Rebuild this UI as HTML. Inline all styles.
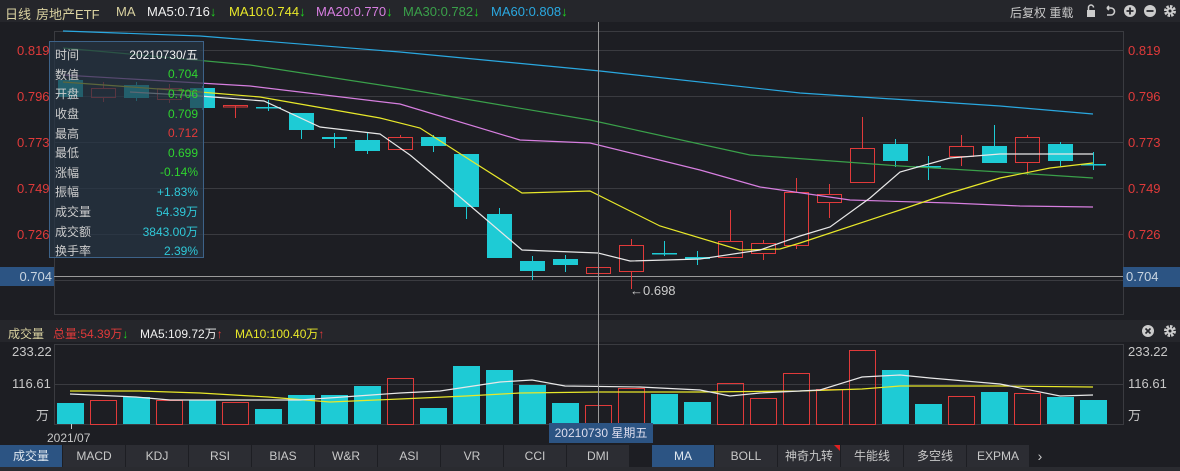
<!DOCTYPE html>
<html><head><meta charset="utf-8"><style>
*{margin:0;padding:0;box-sizing:border-box}
body{width:1180px;height:471px;background:#1d1e23;overflow:hidden;font-family:"Liberation Sans","Noto Sans CJK SC",sans-serif;position:relative;font-size:12px}
.abs{position:absolute;white-space:nowrap}
.hdr{left:0;top:0;width:1180px;height:22px;background:#25262b}
.tabs{left:0;top:445px;height:22px;display:flex}
.tab{width:63px;height:22px;background:#2c2d33;color:#c8c8c8;text-align:center;line-height:22px;font-size:12px;border-right:1px solid #1d1e23}
.tab.on{background:#2c5483;color:#e0e8f0}
.tt td{font-size:12px;height:19.6px;padding:0}
.h{font-size:13px}
.dn{color:#1fd21f;font-weight:bold}
.up{color:#e03a3a;font-weight:bold}
</style></head><body>
<div class="abs hdr"></div>
<div class="abs h" style="left:5px;top:4px;color:#d9d1a0">日线</div>
<div class="abs h" style="left:36px;top:4px;color:#d9d1a0">房地产ETF</div>
<div class="abs h" style="left:116px;top:4px;color:#d9d1a0">MA</div>
<div class="abs h" style="left:147px;top:4px;color:#f0f0f0">MA5:0.716<span class="dn">↓</span></div>
<div class="abs h" style="left:229px;top:4px;color:#e8e82a">MA10:0.744<span class="dn">↓</span></div>
<div class="abs h" style="left:316px;top:4px;color:#d77fe0">MA20:0.770<span class="dn">↓</span></div>
<div class="abs h" style="left:403px;top:4px;color:#3aa04a">MA30:0.782<span class="dn">↓</span></div>
<div class="abs h" style="left:491px;top:4px;color:#2aa8e0">MA60:0.808<span class="dn">↓</span></div>
<div class="abs" style="left:1010px;top:4px;color:#c8c8c8">后复权 重载</div>
<svg class="abs" style="left:1085px;top:4px" width="95" height="14">
<rect x="2" y="6" width="8" height="7" fill="#ccc"/><path d="M3.5 6V3.5a2.5 2.5 0 0 1 5 0" stroke="#ccc" stroke-width="1.5" fill="none"/>
<path d="M22 4h4a3.5 3.5 0 0 1 0 7h-4M22 4l2-2M22 4l2 2" stroke="#ccc" stroke-width="1.6" fill="none"/>
<circle cx="45" cy="7" r="6" fill="#ccc"/><path d="M41.5 7h7M45 3.5v7" stroke="#25262b" stroke-width="1.8"/>
<circle cx="65" cy="7" r="6" fill="#ccc"/><path d="M61.5 7h7" stroke="#25262b" stroke-width="1.8"/>
<circle cx="85" cy="7" r="4.5" fill="none" stroke="#ccc" stroke-width="3" stroke-dasharray="2.4 1.1"/><circle cx="85" cy="7" r="3.5" fill="#ccc"/><circle cx="85" cy="7" r="1.5" fill="#25262b"/>
</svg>

<svg class="abs" style="left:0;top:0" width="1180" height="471">
<g stroke="#3a3b40" stroke-width="1">
<line x1="54" y1="31.5" x2="1124" y2="31.5"/>
<line x1="54" y1="50.5" x2="1124" y2="50.5"/>
<line x1="54" y1="96.5" x2="1124" y2="96.5"/>
<line x1="54" y1="142.5" x2="1124" y2="142.5"/>
<line x1="54" y1="188.5" x2="1124" y2="188.5"/>
<line x1="54" y1="234.5" x2="1124" y2="234.5"/>
<line x1="54" y1="280.5" x2="1124" y2="280.5"/>
<line x1="54" y1="314.5" x2="1124" y2="314.5"/>
<line x1="54.5" y1="31" x2="54.5" y2="314"/>
<line x1="1123.5" y1="31" x2="1123.5" y2="314"/>
</g>
<rect x="0" y="320" width="1180" height="22" fill="#25262b"/>
<g stroke="#3a3b40">
<line x1="54" y1="344.5" x2="1124" y2="344.5"/>
<line x1="54" y1="384.5" x2="1124" y2="384.5"/>
<line x1="54" y1="424.5" x2="1124" y2="424.5"/>
<line x1="54.5" y1="344" x2="54.5" y2="424"/>
<line x1="1123.5" y1="344" x2="1123.5" y2="424"/>
</g>
<line x1="0" y1="276.5" x2="1180" y2="276.5" stroke="#9a9a9a"/>
<g id="c"></g>
<polyline fill="none" stroke="#2aa8e0" stroke-width="1.2" points="63,31 200,36 400,52 600,71 800,93 1000,106 1093,114"/>
<polyline fill="none" stroke="#3aa04a" stroke-width="1.2" points="63,48 250,65 400,88 590,120 750,155 900,166 1000,172 1093,178"/>
<polyline fill="none" stroke="#d77fe0" stroke-width="1.2" points="63,75 250,86 400,104 520,140 590,143 700,170 760,187 850,200 950,203 1020,206 1093,207"/>
<polyline fill="none" stroke="#e8e82a" stroke-width="1.2" points="63,82 200,92 260,97 380,118 420,128 470,160 522,193 590,191 660,226 740,250 780,249 800,243 900,210 950,193 1000,178 1050,168 1093,163"/>
<polyline fill="none" stroke="#e8e8e8" stroke-width="1.2" points="130,92 200,96 264,101 320,127 380,134 410,155 440,180 522,250 598,253 630,261 700,259 760,250 800,236 830,227 870,198 900,172 950,158 1000,154 1093,154"/>
<polyline fill="none" stroke="#e8e82a" stroke-width="1.2" points="70,391 140,391 200,393 268,397 330,402 400,399 466,396 520,393 598,392 700,392 800,391 862,389 900,386 1000,386 1093,387"/>
<polyline fill="none" stroke="#e8e8e8" stroke-width="1.2" points="70,394 136,397 170,400 236,400 300,400 400,393 440,391 500,382 532,380 565,386 640,387 700,390 730,396 760,393 820,390 862,377 900,375 930,378 1000,384 1060,396 1093,395"/>
<line x1="598.5" y1="22" x2="598.5" y2="424" stroke="#9a9a9a"/>
</svg>
<script>
var C=[["c",80,97,78,100],["r",88,97,82,102],["c",85,98,82,101],["r",88,99,84,103],["c",88,108,86,110],["r",105,105.5,105,118],["c",107,107.5,100,111],["c",113,130,113,139],["c",137,139,133,148],["c",140,151,133,154],["r",137,149,135,150],["c",137,146,135,152],["c",154,207,154,219],["c",214,258,208,258],["c",261,271,256,280],["c",259,265,255,272],["r",267,273,267,273],["r",245,271,239,289],["c",253,253.5,241,256],["c",257,259,251,265],["r",241,257,210,257],["r",243,253,240,260],["r",192,245,178,249],["r",194,202,184,218],["r",148,182,117,182],["c",144,161,139,167],["c",166,166.5,156,180],["r",146,156,135,166],["c",146,163,125,163],["r",137,162,135,175],["c",144,161,142,166],["c",164,164.5,152,170]];
var V=[403,400,397,400,400,402,409,395,395,386,378,408,366,370,385,403,405,388,394,402,383,398,373,389,350,370,404,396,392,393,397,400];
var s="";
for(var i=0;i<32;i++){var x=70+33*i,d=C[i],col=d[0]=="c"?"#1ecbd5":"#e03a3a";
var h=Math.max(d[2]-d[1],1.5);
if(d[0]=="c"){s+='<line x1="'+(x+.5)+'" y1="'+d[3]+'" x2="'+(x+.5)+'" y2="'+d[4]+'" stroke="'+col+'"/>';s+='<rect x="'+(x-12)+'" y="'+d[1]+'" width="25" height="'+h+'" fill="'+col+'"/>';}
else{s+='<line x1="'+(x+.5)+'" y1="'+d[3]+'" x2="'+(x+.5)+'" y2="'+d[1]+'" stroke="'+col+'"/><line x1="'+(x+.5)+'" y1="'+d[2]+'" x2="'+(x+.5)+'" y2="'+d[4]+'" stroke="'+col+'"/>';s+='<rect x="'+(x-11.5)+'" y="'+(d[1]+.5)+'" width="24" height="'+h+'" fill="none" stroke="'+col+'"/>';}
var vc=d[0];
if(vc=="c")s+='<rect x="'+(x-13)+'" y="'+V[i]+'" width="27" height="'+(424-V[i])+'" fill="#1ecbd5"/>';
else s+='<rect x="'+(x-12.5)+'" y="'+(V[i]+.5)+'" width="26" height="'+(424-V[i])+'" fill="none" stroke="#e03a3a"/>';}
document.getElementById("c").outerHTML=s;
</script>
<div class="abs" style="left:49px;top:41px;width:155px;height:217px;background:rgba(38,52,68,0.72);border:1px solid #3d6288;padding:3px 5px 0 5px">
<table class="tt" style="width:100%;border-collapse:collapse">
<tr><td style="color:#ccc">时间</td><td style="text-align:right;color:#f0f0f0">20210730/五</td></tr>
<tr><td style="color:#ccc">数值</td><td style="text-align:right;color:#2fd32f">0.704</td></tr>
<tr><td style="color:#ccc">开盘</td><td style="text-align:right;color:#2fd32f">0.706</td></tr>
<tr><td style="color:#ccc">收盘</td><td style="text-align:right;color:#2fd32f">0.709</td></tr>
<tr><td style="color:#ccc">最高</td><td style="text-align:right;color:#e53b3b">0.712</td></tr>
<tr><td style="color:#ccc">最低</td><td style="text-align:right;color:#2fd32f">0.699</td></tr>
<tr><td style="color:#ccc">涨幅</td><td style="text-align:right;color:#2fd32f">-0.14%</td></tr>
<tr><td style="color:#ccc">振幅</td><td style="text-align:right;color:#2fc8d8">+1.83%</td></tr>
<tr><td style="color:#ccc">成交量</td><td style="text-align:right;color:#2fc8d8">54.39万</td></tr>
<tr><td style="color:#ccc">成交额</td><td style="text-align:right;color:#2fc8d8">3843.00万</td></tr>
<tr><td style="color:#ccc">换手率</td><td style="text-align:right;color:#2fc8d8">2.39%</td></tr>
</table></div>
<div class="abs" style="left:17px;top:43px;color:#e03a3a;font-size:13px">0.819</div>
<div class="abs" style="left:17px;top:89px;color:#e03a3a;font-size:13px">0.796</div>
<div class="abs" style="left:17px;top:135px;color:#e03a3a;font-size:13px">0.773</div>
<div class="abs" style="left:17px;top:181px;color:#e03a3a;font-size:13px">0.749</div>
<div class="abs" style="left:17px;top:227px;color:#e03a3a;font-size:13px">0.726</div>
<div class="abs" style="left:0;top:267px;width:54px;height:19px;background:#2c5483;color:#c8d4e0;text-align:right;padding-right:2px;line-height:19px;font-size:13px">0.704</div>
<div class="abs" style="left:1128px;top:43px;color:#e03a3a;font-size:13px">0.819</div>
<div class="abs" style="left:1128px;top:89px;color:#e03a3a;font-size:13px">0.796</div>
<div class="abs" style="left:1128px;top:135px;color:#e03a3a;font-size:13px">0.773</div>
<div class="abs" style="left:1128px;top:181px;color:#e03a3a;font-size:13px">0.749</div>
<div class="abs" style="left:1128px;top:227px;color:#e03a3a;font-size:13px">0.726</div>
<div class="abs" style="left:1123px;top:267px;width:57px;height:20px;background:#2c5483;color:#c8d4e0;padding-left:3px;line-height:20px;font-size:13px">0.704</div>
<div class="abs" style="left:630px;top:283px;color:#ccc;font-size:13px">←0.698</div>
<div class="abs" style="left:8px;top:325px;color:#d9d1a0">成交量</div>
<div class="abs" style="left:53px;top:325px;color:#e03a3a">总量:54.39万<span class="dn">↓</span></div>
<div class="abs" style="left:140px;top:325px;color:#f0f0f0">MA5:109.72万<span class="up">↑</span></div>
<div class="abs" style="left:235px;top:325px;color:#e8e82a">MA10:100.40万<span class="up">↑</span></div>
<svg class="abs" style="left:1140px;top:324px" width="40" height="14"><circle cx="8" cy="7" r="6" fill="#ccc"/><path d="M5.5 4.5l5 5M10.5 4.5l-5 5" stroke="#25262b" stroke-width="1.6"/><circle cx="30" cy="7" r="4.5" fill="none" stroke="#ccc" stroke-width="3" stroke-dasharray="2.4 1.1"/><circle cx="30" cy="7" r="3.5" fill="#ccc"/><circle cx="30" cy="7" r="1.5" fill="#25262b"/></svg>
<div class="abs" style="left:12px;top:344px;color:#c8c8c8;font-size:13px">233.22</div>
<div class="abs" style="left:12px;top:376px;color:#c8c8c8;font-size:13px">116.61</div>
<div class="abs" style="left:36px;top:405px;color:#c8c8c8;font-size:13px">万</div>
<div class="abs" style="left:1128px;top:344px;color:#c8c8c8;font-size:13px">233.22</div>
<div class="abs" style="left:1128px;top:376px;color:#c8c8c8;font-size:13px">116.61</div>
<div class="abs" style="left:1128px;top:405px;color:#c8c8c8;font-size:13px">万</div>
<div class="abs" style="left:71px;top:424px;width:1px;height:5px;background:#ccc"></div>
<div class="abs" style="left:47px;top:431px;color:#c8c8c8">2021/07</div>
<div class="abs" style="left:549px;top:423px;width:104px;height:20px;background:#2c5483;color:#dde;line-height:20px;text-align:center">20210730 星期五</div>
<div class="abs tabs">
<div class="tab on">成交量</div><div class="tab">MACD</div><div class="tab">KDJ</div><div class="tab">RSI</div><div class="tab">BIAS</div><div class="tab">W&amp;R</div><div class="tab">ASI</div><div class="tab">VR</div><div class="tab">CCI</div><div class="tab">DMI</div>
<div style="width:22px"></div>
<div class="tab on">MA</div><div class="tab">BOLL</div><div class="tab" style="position:relative">神奇九转<span style="position:absolute;right:0;top:0;width:0;height:0;border-left:6px solid transparent;border-top:6px solid #e02020"></span></div><div class="tab">牛能线</div><div class="tab">多空线</div><div class="tab">EXPMA</div>
<div style="width:20px;color:#ccc;line-height:22px;text-align:center;font-size:14px">›</div>
</div>
<div class="abs" style="left:0;top:467px;width:1180px;height:4px;background:#2a2b30"></div>
</body></html>
